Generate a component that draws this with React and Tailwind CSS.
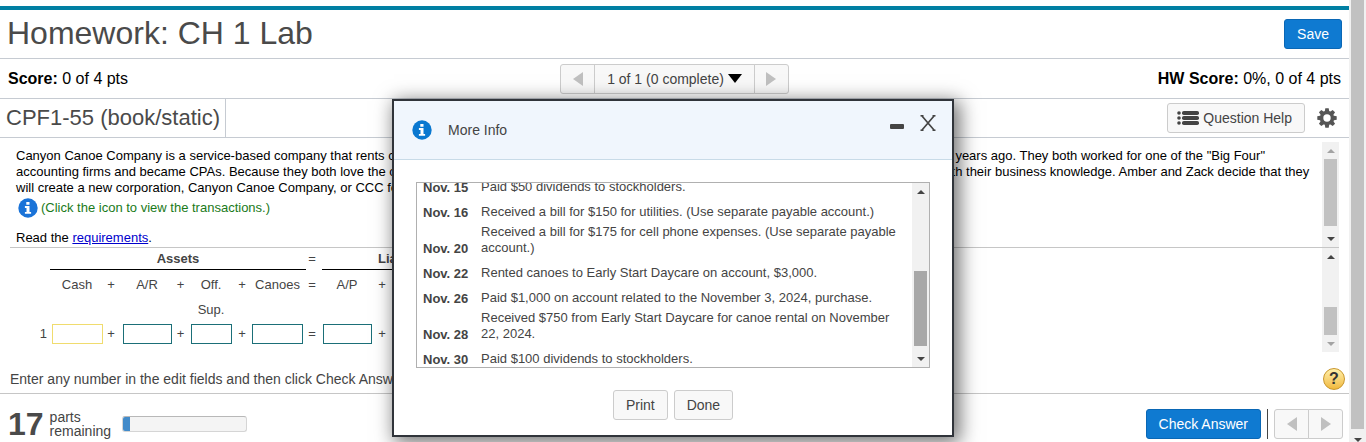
import React, { useState } from 'react';

const transactions = [
  { date: 'Nov. 15', text: 'Paid $50 dividends to stockholders.' },
  { date: 'Nov. 16', text: 'Received a bill for $150 for utilities. (Use separate payable account.)' },
  { date: 'Nov. 20', text: 'Received a bill for $175 for cell phone expenses. (Use separate payable account.)' },
  { date: 'Nov. 22', text: 'Rented canoes to Early Start Daycare on account, $3,000.' },
  { date: 'Nov. 26', text: 'Paid $1,000 on account related to the November 3, 2024, purchase.' },
  { date: 'Nov. 28', text: 'Received $750 from Early Start Daycare for canoe rental on November 22, 2024.' },
  { date: 'Nov. 30', text: 'Paid $100 dividends to stockholders.' },
];

const accounts = [
  { name: 'Cash', field: 'w-[51px]', after: '+' },
  { name: 'A/R', field: 'w-[49px]', after: '+' },
  { name: 'Off. Sup.', field: 'w-[41px]', after: '+' },
  { name: 'Canoes', field: 'w-[51px]', after: '=' },
  { name: 'A/P', field: 'w-[49px]', after: '+' },
];

const plainButton = 'border border-[#cccccc] bg-[#f8f8f8] text-sm text-[#444444] cursor-pointer';
const blueButton = 'h-[30px] rounded-[3px] border border-[#0a67b5] bg-[#0f7ad1] px-3 text-sm text-white cursor-pointer';

const InfoIcon = ({ className, color }) => (
  <svg viewBox="0 0 20 20" className={className} aria-hidden="true">
    <circle cx="10" cy="10" r="9.7" fill={color} />
    <path d="M8.3 3.9h3.2v2.8H8.3zM6.9 8h4.6v5.9h1.6v1.9H6.9v-1.9h1.6V9.9H6.9z" fill="#fff" />
  </svg>
);

const GearIcon = () => (
  <svg viewBox="0 0 20 20" className="size-5" aria-hidden="true">
    <g fill="#555">
      {[0, 45, 90, 135].map((angle) => (
        <path key={angle} d="M8.3 0.3h3.4l0.7 4v11.4l-0.7 4H8.3l-0.7-4V4.3z" transform={`rotate(${angle} 10 10)`} />
      ))}
      <circle cx="10" cy="10" r="7.2" />
    </g>
    <circle cx="10" cy="10" r="3.7" fill="#fff" />
  </svg>
);

const ListIcon = () => (
  <svg viewBox="0 0 22 14" className="h-[14px] w-[22px]" fill="#444" aria-hidden="true">
    {[2, 7, 12].map((y) => (
      <g key={y}>
        <circle cx="2" cy={y} r="1.8" />
        <rect x="5" y={y - 2} width="17" height="4" rx="1.8" />
      </g>
    ))}
  </svg>
);

const Triangle = ({ direction, className }) => (
  <svg viewBox="0 0 10 14" className={className} fill="#c0c0c0" aria-hidden="true">
    <path d={direction === 'left' ? 'M10 0v14L0 7z' : 'M0 0v14l10-7z'} />
  </svg>
);

const Arrow = ({ up, light }) => (
  <div className="flex h-[17px] shrink-0 items-center justify-center">
    <svg viewBox="0 0 8 4" className="h-1 w-2" fill={light ? '#a3a3a3' : '#444'} aria-hidden="true">
      <path d={up ? 'M0 4l4-4 4 4z' : 'M0 0l4 4 4-4z'} />
    </svg>
  </div>
);

// Barra de desplazamiento; thumb lleva el margen y la altura
const ScrollBar = ({ thumb, lightUp, lightDown }) => (
  <div className="flex w-[17px] shrink-0 flex-col justify-between bg-[#f1f1f1]">
    <div>
      <Arrow up light={lightUp} />
      <div className={`mx-0.5 ${thumb}`} />
    </div>
    <Arrow light={lightDown} />
  </div>
);

const MoreInfo = ({ onClose }) => (
  <div
    role="dialog"
    aria-labelledby="more-info"
    className="absolute left-[29.06%] top-[99px] w-[562px] border-2 border-[#30343a] bg-white shadow-[4px_4px_18px_2px_rgba(0,0,0,0.55)]"
  >
    <div className="flex h-[59px] items-center border-b border-[#c8dbe8] bg-[#f0f6fd] pl-[18px] pr-4">
      <InfoIcon className="size-5" color="#0a78d0" />
      <h3 id="more-info" className="ml-4 flex-1 text-sm text-[#444444]">More Info</h3>
      <div className="mb-3.5 flex items-center gap-4">
        <button type="button" aria-label="Minimize" className="pt-1.5 cursor-pointer">
          <span className="block h-[5px] w-[14px] rounded-[1px] bg-[#444444]" />
        </button>
        <button type="button" aria-label="Close" onClick={onClose} className="cursor-pointer">
          <svg viewBox="0 0 16 16" className="size-4" aria-hidden="true">
            <path d="M0.5 0.7h3M12.5 0.7h3M0.5 15.3h3M12.5 15.3h3M1.8 0.8l12.4 14.4M14.2 0.8L1.8 15.2" stroke="#444" strokeWidth="1.7" fill="none" />
          </svg>
        </button>
      </div>
    </div>

    <div className="mx-[22px] mt-[22px] flex h-[186px] border border-[#b0b0b0]">
      <div className="flex flex-1 flex-col justify-end overflow-hidden">
        <table className="-mb-px w-full text-[13px] leading-4 text-[#444444]">
          <tbody>
            {transactions.map((item) => (
              <tr key={item.date}>
                <th scope="row" className="h-[25px] w-16 pl-1.5 text-left align-bottom font-bold">{item.date}</th>
                <td className="h-[25px] pb-px pr-3 pt-[3px] align-bottom">{item.text}</td>
              </tr>
            ))}
          </tbody>
        </table>
      </div>
      <ScrollBar thumb="mt-[71px] h-[75px] bg-[#a8a8a8]" />
    </div>

    <div className="flex justify-center gap-1.5 pb-[15px] pt-[22px]">
      <button type="button" className={`h-[30px] rounded-[3px] px-3 ${plainButton}`}>Print</button>
      <button type="button" onClick={onClose} className={`h-[30px] rounded-[3px] px-3 ${plainButton}`}>Done</button>
    </div>
  </div>
);

const App = () => {
  const [modalIsOpen, setModalIsOpen] = useState(true);
  const [answers, setAnswers] = useState({});

  return (
    <div className="flex min-h-screen overflow-hidden bg-white font-['Liberation_Sans',Arial,sans-serif] text-black">
      <main className="relative min-w-0 flex-1">
        {/* Encabezado */}
        <header className="mt-1.5 flex h-[53px] items-center justify-between border-b border-t-4 border-b-[#c6cbd2] border-t-[#007fa3] px-[7px]">
          <h1 className="pb-0.5 text-[32px] leading-9 text-[#4a4a4a]">Homework: CH 1 Lab</h1>
          <button type="button" className={blueButton}>Save</button>
        </header>

        {/* Puntaje y navegación */}
        <div className="grid h-10 grid-cols-3 items-center border-b border-[#c6cbd2] px-2 text-base">
          <p><b>Score:</b> 0 of 4 pts</p>
          <div className="flex justify-center">
            <button type="button" aria-label="Previous question" className={`flex h-[30px] w-[35px] items-center justify-center rounded-l-[3px] ${plainButton}`}>
              <Triangle direction="left" className="h-[14px] w-[10px]" />
            </button>
            <button type="button" className={`-ml-px flex h-[30px] items-center gap-1 px-3 ${plainButton}`}>
              1 of 1 (0 complete)
              <svg viewBox="0 0 14 9" className="h-[9px] w-[14px]" aria-hidden="true"><path d="M0 0h14L7 9z" /></svg>
            </button>
            <button type="button" aria-label="Next question" className={`-ml-px flex h-[30px] w-[35px] items-center justify-center rounded-r-[3px] ${plainButton}`}>
              <Triangle direction="right" className="h-[14px] w-[10px]" />
            </button>
          </div>
          <p className="text-right"><b>HW Score:</b> 0%, 0 of 4 pts</p>
        </div>

        {/* Título de la pregunta */}
        <div className="flex h-[39px] items-center justify-between border-b border-[#c6cbd2] pl-1.5 pr-3">
          <h2 className="h-full border-r border-[#c6cbd2] pr-[5px] text-[22px] leading-[38px] text-[#4a4a4a]">CPF1-55 (book/static)</h2>
          <div className="flex items-center gap-3">
            <button type="button" className={`flex h-[30px] items-center gap-1 rounded-[3px] pl-[9px] pr-3 ${plainButton}`}>
              <ListIcon />
              Question Help
            </button>
            <button type="button" aria-label="Settings" className="cursor-pointer"><GearIcon /></button>
          </div>
        </div>

        {/* Enunciado */}
        <section className="ml-2.5 mr-2.5 flex border-b border-[#c6c6c6] pt-1">
          <div className="flex-1 pb-px pl-1.5 pr-2 pt-1.5 text-[13px] leading-4">
            <p>
              Canyon Canoe Company is a service-based company that rents canoes for use on local lakes and rivers. Amber
              and Zack Wilson graduated from college about 10 years ago. They both worked for one of the "Big Four"
              accounting firms and became CPAs. Because they both love the outdoors, they decided to begin a new business
              that will combine their love of outdoor activities with their business knowledge. Amber and Zack decide that they
              will create a new corporation, Canyon Canoe Company, or CCC for short.
            </p>
            <button type="button" onClick={() => setModalIsOpen(true)} className="ml-0.5 mt-0.5 flex items-center gap-[3px] text-[#1a7a1a] cursor-pointer">
              <InfoIcon className="size-5" color="#1a73d8" />
              (Click the icon to view the transactions.)
            </button>
            <p className="mt-3">Read the <a href="#requirements" className="text-[#0000cc] underline">requirements</a>.</p>
          </div>
          <ScrollBar lightUp thumb="h-[67px] bg-[#c1c1c1]" />
        </section>

        {/* Ecuación contable */}
        <section className="mx-2.5 flex h-[104px]">
          <div className="flex-1">
            <table className="w-[484px] table-fixed text-[13px] text-[#444444]">
              <colgroup>
                <col className="w-[40px]" />
                <col className="w-[54px]" />
                <col className="w-[14px]" />
                <col className="w-[58px]" />
                <col className="w-[9px]" />
                <col className="w-[52px]" />
                <col className="w-[10px]" />
                <col className="w-[61px]" />
                <col className="w-[8px]" />
                <col className="w-[62px]" />
                <col className="w-[8px]" />
                <col className="w-[108px]" />
              </colgroup>
              <thead>
                <tr className="leading-5">
                  <td />
                  <th colSpan="7" className="pr-0.5"><div className="border-b border-black pt-px">Assets</div></th>
                  <td className="text-center">=</td>
                  <th colSpan="3" className="pl-1.5"><div className="border-b border-black pt-px">Liabilities</div></th>
                </tr>
                <tr className="align-top leading-[25px]">
                  <td />
                  {accounts.map((account) => (
                    <React.Fragment key={account.name}>
                      <th className="px-1 pt-0.5 font-normal">{account.name}</th>
                      <td className="pt-0.5 text-center">{account.after}</td>
                    </React.Fragment>
                  ))}
                  <th className="px-1 pt-0.5 font-normal">Unearned Revenue</th>
                </tr>
              </thead>
              <tbody>
                <tr>
                  <td className="h-6 pr-[3px] text-right">1</td>
                  {accounts.map((account) => (
                    <React.Fragment key={account.name}>
                      <td className="p-0">
                        <input
                          type="text"
                          aria-label={account.name}
                          value={answers[account.name] || ''}
                          onChange={(e) => setAnswers({ ...answers, [account.name]: e.target.value })}
                          className={`block mx-auto h-5 border px-1 outline-none ${account.field} ${account.name === 'Cash' ? 'border-[#f0dc6e]' : 'border-[#1b6f78]'}`}
                        />
                      </td>
                      <td className="p-0 text-center">{account.after}</td>
                    </React.Fragment>
                  ))}
                  <td />
                </tr>
              </tbody>
            </table>
          </div>
          <ScrollBar lightDown thumb="mt-[42px] h-[28px] bg-[#c1c1c1]" />
        </section>

        <div className="flex h-[42px] items-center justify-between border-b border-[#c6c6c6] pl-2.5 pr-1 pt-3 text-sm text-[#444444]">
          <p>Enter any number in the edit fields and then click Check Answer.</p>
          <button type="button" aria-label="Help" className="size-[22px] rounded-full border border-[#c9962b] bg-linear-to-b from-[#fff0a8] to-[#f0b93a] text-base font-bold leading-5 text-[#333333] cursor-pointer">
            ?
          </button>
        </div>

        {/* Pie de página */}
        <footer className="flex h-12 items-center pl-2 pr-1.5 pt-3">
          <span className="text-[32px] font-bold leading-9 text-[#4a4a4a]">17</span>
          <p className="ml-1.5 w-[72px] text-sm leading-[14px] text-[#444444]">parts remaining</p>
          <div className="h-4 w-[125px] overflow-hidden rounded-[3px] border border-[#d5d5d5] border-t-[#b8b8b8] bg-[#f4f4f4]">
            <div className="h-full w-[7px] bg-[#428bca]" />
          </div>
          <button type="button" className={`ml-auto ${blueButton}`}>Check Answer</button>
          <div className="mx-1.5 h-[30px] border-l border-[#444444]" />
          <button type="button" aria-label="Previous part" className={`flex h-[30px] w-[35px] items-center justify-center rounded-l-[3px] ${plainButton}`}>
            <Triangle direction="left" className="h-[14px] w-[10px]" />
          </button>
          <button type="button" aria-label="Next part" className={`-ml-px flex h-[30px] w-[35px] items-center justify-center rounded-r-[3px] ${plainButton}`}>
            <Triangle direction="right" className="h-[14px] w-[10px]" />
          </button>
        </footer>

        {modalIsOpen && <MoreInfo onClose={() => setModalIsOpen(false)} />}
      </main>

      {/* Barra de la ventana */}
      <div className="flex w-[17px] shrink-0 flex-col bg-[#f1f1f1]">
        <div className="mx-0.5 flex-1 bg-[#c1c1c1]" />
        <div className="flex h-[13px] items-end justify-center">
          <svg viewBox="0 0 8 4" className="h-1 w-2" fill="#444" aria-hidden="true"><path d="M0 0l4 4 4-4z" /></svg>
        </div>
      </div>
    </div>
  );
};

export default App;
